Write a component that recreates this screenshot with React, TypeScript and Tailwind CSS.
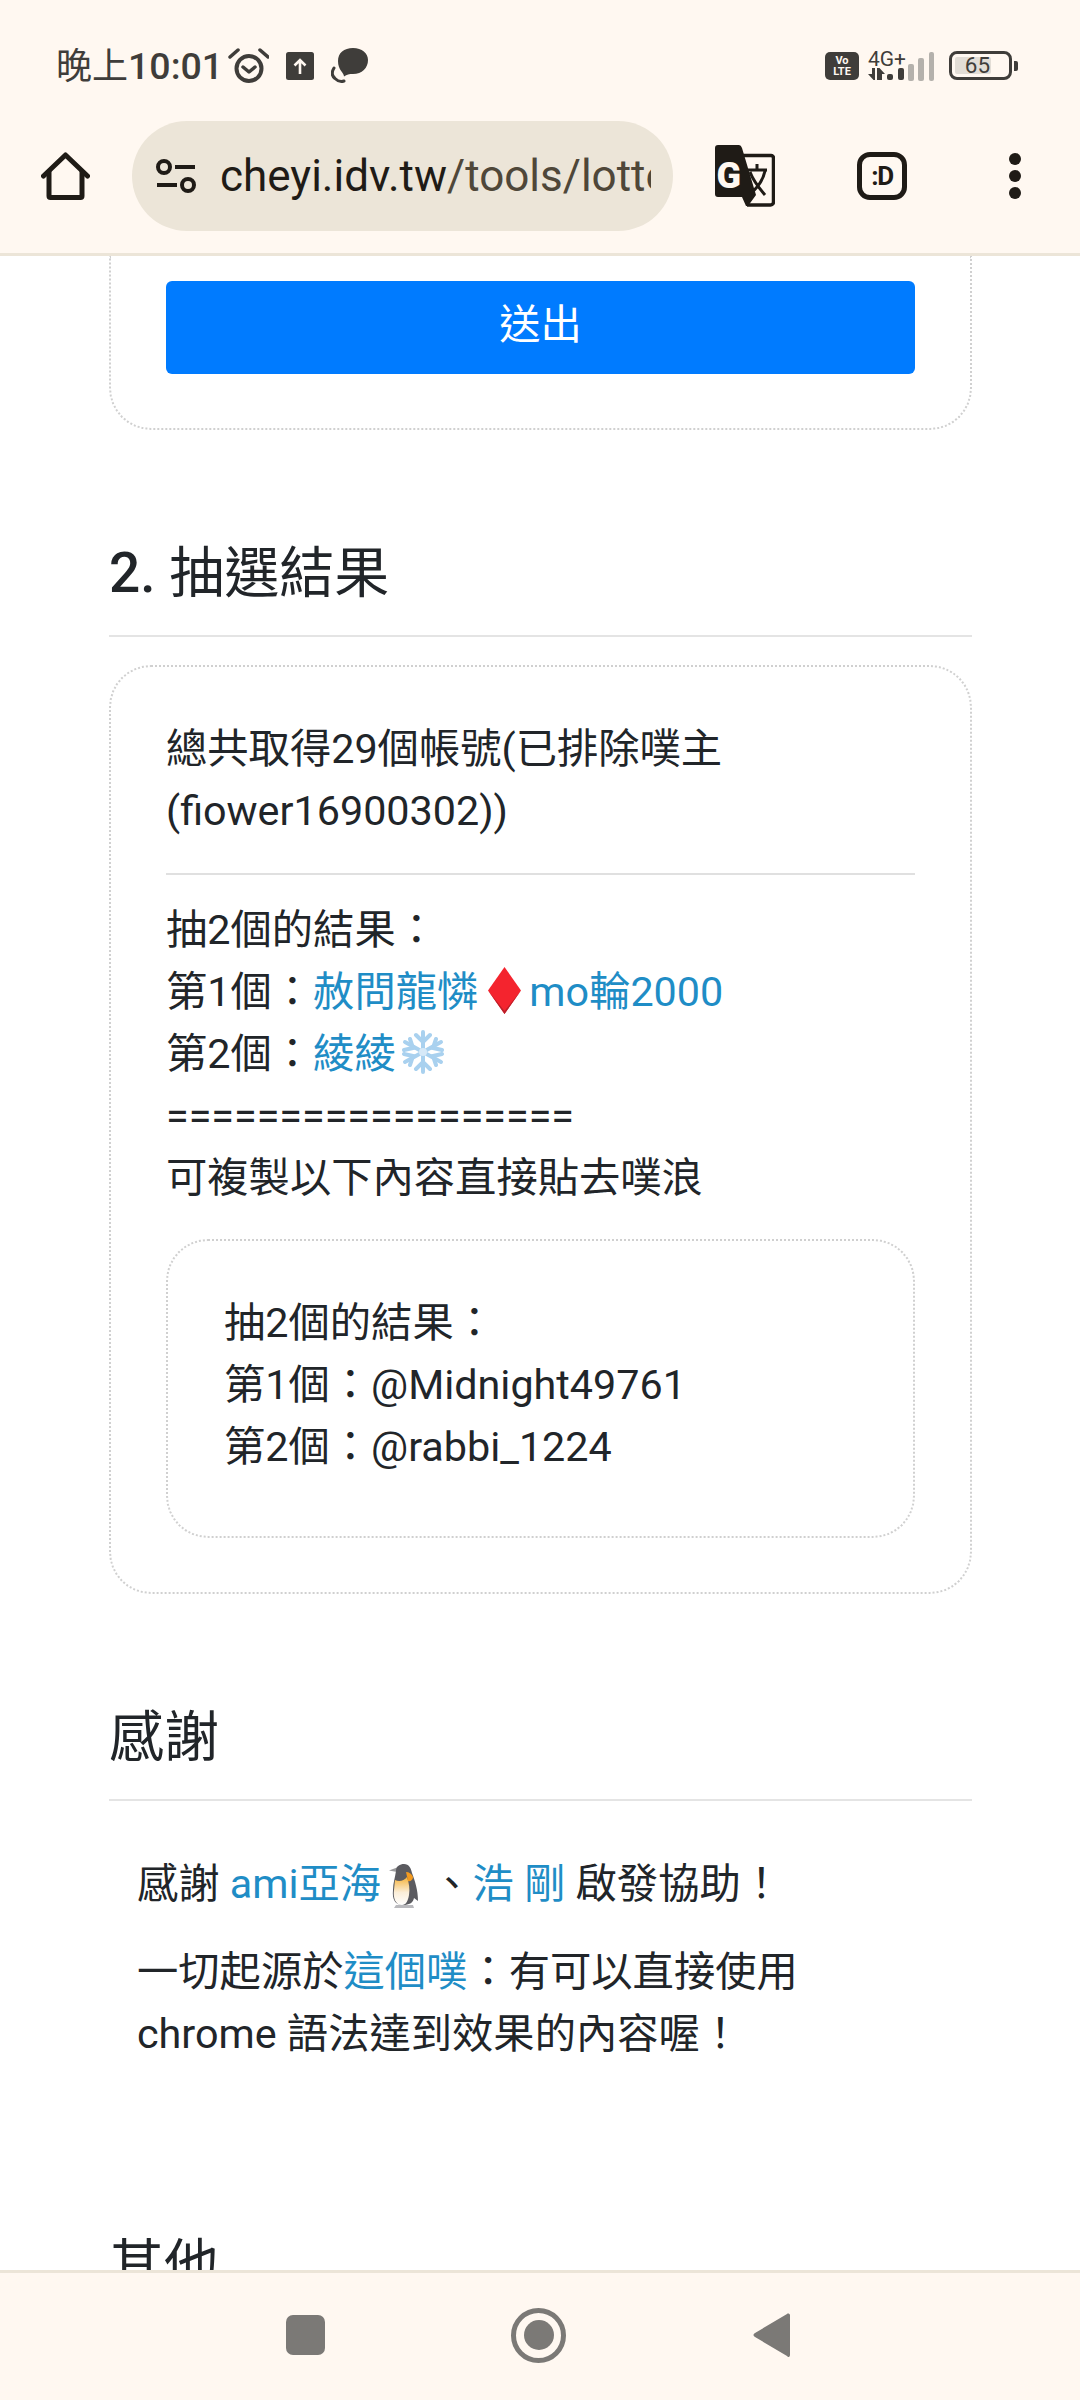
import React from "react";

function AlarmIcon() {
  return (
    <svg width="41" height="35" viewBox="0 0 41 35" fill="none" stroke="#3f3d3a">
      <circle cx="21" cy="20.500" r="12.500" strokeWidth="4" />
      <path d="M15 19l6 5 6-5" strokeWidth="3.500" strokeLinecap="round" strokeLinejoin="round" />
      <path d="M2 9l8-7M40 9l-8-7" strokeWidth="3.500" strokeLinecap="round" />
    </svg>
  );
}

function UploadBadge() {
  return (
    <svg width="28" height="28" viewBox="0 0 28 28">
      <rect width="28" height="28" rx="2.500" fill="#3f3d3a" />
      <path d="M14 22V8M8.500 13.500L14 8l5.500 5.500" stroke="#fff8f1" strokeWidth="2.600" fill="none" />
    </svg>
  );
}

function BubbleIcon() {
  return (
    <svg width="37" height="35" viewBox="0 0 37 35">
      <path d="M7 13C7 5 13 0 22 0c9 0 15 5 15 12 0 8-6 14-15 14-4 0-6 .5-9 2.500 0-4-6-6-6-15.500z" fill="#3f3d3a" />
      <path d="M3 20c-2.500 4-2 8 1 10.500 2.500 2.500 6 3.500 9 2.500" stroke="#3f3d3a" strokeWidth="3" fill="none" strokeLinecap="round" />
    </svg>
  );
}

function SignalIcon() {
  return (
    <svg width="66" height="32" viewBox="0 0 66 32">
      <path d="M0 24h4v-6h3v12h-1.500zM9 18h2.500L17 24h-3v6H9z" fill="#3f3d3a" />
      <rect x="19" y="24" width="6" height="6" rx="2" fill="#3f3d3a" />
      <rect x="30" y="18" width="6" height="12" rx="2" fill="#3f3d3a" />
      <rect x="40" y="14" width="6" height="17" rx="2" fill="#b4b1ac" />
      <rect x="50" y="8" width="6" height="23" rx="2" fill="#b4b1ac" />
      <rect x="61" y="2" width="5" height="29" rx="2" fill="#b4b1ac" />
    </svg>
  );
}

function HomeIcon() {
  return (
    <svg width="49" height="48" viewBox="0 0 49 48" fill="none" stroke="#1f1b16" strokeWidth="5" strokeLinecap="round" strokeLinejoin="round">
      <path d="M2.500 24L24.500 3l22 21" />
      <path d="M8 20v24a1.500 1.500 0 001.500 1.500h30A1.500 1.500 0 0041 44V20" />
    </svg>
  );
}

function TuneIcon() {
  return (
    <svg width="40" height="34" viewBox="0 0 40 34" fill="none" stroke="#1f1b16" strokeWidth="4">
      <circle cx="8" cy="8" r="6" />
      <path d="M19 8h20M1 26h20" />
      <circle cx="32" cy="26" r="6" />
    </svg>
  );
}

function TranslateIcon() {
  return (
    <svg width="60" height="62" viewBox="0 0 60 62" className="shrink-0">
      <path d="M28 10.500h28a2.500 2.500 0 012.500 2.500v44a3 3 0 01-3 3H32" fill="#fff8f1" stroke="#1f1b16" strokeWidth="3.500" />
      <path d="M3 0h21q2 0 3 3l14 47-8 11h-2l-4-9H3q-3 0-3-3V3q0-3 3-3z" fill="#1f1b16" />
      <text x="1.500" y="43" fontFamily="Roboto" fontWeight="900" fontSize="36" fill="#fff8f1">G</text>
      <path d="M33 25h19M42 19v6M50 26c-2 9-8 17-14 22M35 27c3 8 9 16 15 23" stroke="#1f1b16" strokeWidth="3" fill="none" />
    </svg>
  );
}

function MenuDots() {
  return (
    <div className="flex flex-col gap-[5px]">
      <div className="w-[12px] h-[12px] rounded-full bg-[#1f1b16]" />
      <div className="w-[12px] h-[12px] rounded-full bg-[#1f1b16]" />
      <div className="w-[12px] h-[12px] rounded-full bg-[#1f1b16]" />
    </div>
  );
}

function DiamondEmoji() {
  return (
    <svg width="33" height="47" viewBox="0 0 33 47" className="inline-block align-[-8px] ml-[10px] mr-[8px]">
      <path d="M16.500 0L33 23.500 16.500 47 0 23.500z" fill="#f4242e" />
      <path d="M0 23.500L16.500 47 33 23.500 16.500 44z" fill="#b9202a" />
    </svg>
  );
}

function SnowflakeEmoji() {
  return (
    <svg width="42" height="44" viewBox="0 0 42 44" className="inline-block align-[-6px] ml-[6px]" fill="none" stroke="#a9d1ef" strokeWidth="4" strokeLinecap="round">
      <path d="M21 2v40M3 12l36 20M39 12L3 32" />
      <path d="M14 5l7 7 7-7M14 39l7-7 7 7M2 20l9-2-3-9M40 20l-9-2 3-9M2 24l9 2-3 9M40 24l-9 2 3 9" />
      <circle cx="21" cy="22" r="4" fill="#d6e9f8" stroke="none" />
    </svg>
  );
}

function PenguinEmoji() {
  return (
    <svg width="30" height="44" viewBox="0 0 30 44" className="inline-block align-[-10px] ml-[8px] mr-[12px]">
      <defs>
        <linearGradient id="belly" x1="0" y1="0" x2="0" y2="1">
          <stop offset="0" stopColor="#f6b33a" />
          <stop offset="0.55" stopColor="#fbeed8" />
          <stop offset="1" stopColor="#ffffff" />
        </linearGradient>
      </defs>
      <path d="M0 6.500L8 3.500V8z" fill="#9a9a9c" />
      <path d="M7 7c0-5 4-7 8-7 5 0 7 4 8 9 3 8 6 17 6 28l-4-3c-1 5-5 7-11 7-8 0-11-6-10-15 0-7 2-12 3-19z" fill="#5b5b60" />
      <path d="M6 16c4 2 9 1 12-3 2 6 3 12 2 18-1 6-3 10-7 10-7 0-9-8-8-15z" fill="url(#belly)" />
      <path d="M17 8c3 0 6 2 7 5 0 3-3 5-5 4z" fill="#f39a1e" />
      <path d="M7 41h17l1 3H5z" fill="#b9b9bd" />
    </svg>
  );
}

function Heading({ children }: { children: React.ReactNode }) {
  return <h2 className="text-[55px] leading-[66px] font-normal text-[#212529] border-b-2 border-[#e4e4e4] pb-[29px]">{children}</h2>;
}

function A({ children }: { children: React.ReactNode }) {
  return <span className="text-[#1f8dc6]">{children}</span>;
}

export default function App() {
  return (
    <div className="w-[1080px] h-[2400px] flex flex-col overflow-hidden bg-white font-['Roboto','Noto_Sans_CJK_TC',sans-serif]">
      <header className="h-[256px] shrink-0 bg-[#fff8f1] border-b-[3px] border-[#ece5d8]">
        <div className="h-[121px] flex items-start pt-[48px] pl-[56px] pr-[68px]">
          <span className="text-[36px] leading-[40px] -mt-[2px] text-[#3f3d3a] mr-[5px]">晚上<span className="text-[37.500px] font-medium">10:01</span></span>
          <AlarmIcon />
          <span className="ml-[17px] mt-[4px]"><UploadBadge /></span>
          <span className="ml-[17px]"><BubbleIcon /></span>
          <div className="ml-auto flex items-start">
            <div className="w-[34px] h-[28px] mt-[4px] rounded-[5px] bg-[#3f3d3a] text-[#fff8f1] text-[11px] leading-[11px] font-bold text-center pt-[3px]">Vo<br />LTE</div>
            <div className="relative ml-[9px] w-[66px] h-[32px] mt-[2px]">
              <SignalIcon />
              <span className="absolute left-0 -top-[2px] text-[21px] leading-[22px] text-[#3f3d3a]">4G+</span>
            </div>
            <div className="ml-[15px] mt-[3px] w-[63px] h-[29px] rounded-[8px] border-[3px] border-[#3f3d3a] p-[3px] relative">
              <div className="h-full w-[70%] rounded-[2px] bg-[#e2ddd6]" />
              <span className="absolute inset-0 pr-[6px] text-center text-[22.500px] leading-[23px] text-[#3f3d3a]">65</span>
              <div className="absolute left-[62px] top-[7px] w-[4px] h-[10px] rounded-r-[2px] bg-[#3f3d3a]" />
            </div>
          </div>
        </div>
        <div className="flex items-center h-[110px]">
          <div className="ml-[41px] w-[49px] h-[48px] shrink-0"><HomeIcon /></div>
          <div className="ml-[42px] w-[541px] h-[110px] shrink-0 rounded-[55px] bg-[#ece5d8] flex items-center pl-[24px] pr-[22px]">
            <TuneIcon />
            <div className="ml-[24px] overflow-hidden whitespace-nowrap text-[44px] leading-[56px] text-[#4f4739] flex-1">
              <span className="text-[#1f1b16]">cheyi.idv.tw</span>/tools/lottery
            </div>
          </div>
          <div className="ml-[42px]"><TranslateIcon /></div>
          <div className="ml-[82px] w-[50px] h-[48px] shrink-0 rounded-[13px] border-[5px] border-[#1f1b16] flex items-center justify-center text-[26px] font-bold tracking-tighter text-[#1f1b16]">:D</div>
          <div className="ml-[102px]"><MenuDots /></div>
        </div>
      </header>

      <main className="flex-1 min-h-0 overflow-hidden pl-[109px] pr-[108px] text-[41.300px] leading-[62px] text-[#212529]">
        <section className="border-2 border-t-0 border-dotted border-[#d0d0d0] rounded-b-[42px] px-[55px] pt-[25px] pb-[54px]">
          <button className="w-full h-[93px] pb-[6px] rounded-[6px] bg-[#007bff] text-white text-[41.300px]">送出</button>
        </section>

        <div className="mt-[110px]">
          <Heading><span className="font-medium">2.</span> 抽選結果</Heading>
        </div>

        <section className="mt-[28px] border-2 border-dotted border-[#d0d0d0] rounded-[42px] px-[55px] pt-[51px] pb-[54px]">
          <p>總共取得29個帳號(已排除噗主<br />(fiower16900302))</p>
          <hr className="mt-[31px] mb-[24px] border-t-2 border-[#e0e0e0]" />
          <p>
            抽2個的結果：<br />
            第1個：<A>赦問龍憐</A><DiamondEmoji /><A>mo輪2000</A><br />
            第2個：<A>綾綾</A><SnowflakeEmoji /><br />
            ==================<br />
            可複製以下內容直接貼去噗浪
          </p>
          <div className="mt-[30px] border-2 border-dotted border-[#d0d0d0] rounded-[42px] px-[56px] pt-[51px] pb-[58px]">
            抽2個的結果：<br />
            第1個：@Midnight49761<br />
            第2個：@rabbi_1224
          </div>
        </section>

        <div className="mt-[110px]">
          <Heading>感謝</Heading>
        </div>

        <div className="px-[28px] pt-[52px]">
          <p>感謝 <A>ami亞海</A><PenguinEmoji />、<A>浩 剛</A> 啟發協助！</p>
          <p className="mt-[26px]">一切起源於<A>這個噗</A>：有可以直接使用<br />chrome 語法達到效果的內容喔！</p>
        </div>

        <div className="mt-[167px] text-[55px] leading-[66px]">其他</div>
      </main>

      <footer className="h-[130px] shrink-0 bg-[#fff8f1] border-t-[3px] border-[#ece5d8] flex items-center pl-[286px] pb-[3px]">
        <div className="w-[39px] h-[40px] rounded-[7px] bg-[#7b7976]" />
        <div className="ml-[186px] w-[55px] h-[55px] rounded-full border-[5px] border-[#7b7976] flex items-center justify-center">
          <div className="w-[30px] h-[30px] rounded-full bg-[#7b7976]" />
        </div>
        <svg width="37" height="46" viewBox="0 0 37 46" className="ml-[187px]">
          <path d="M37 3v40c0 2-2 3-3 1L2 25c-2-1-2-3 0-4L34 2c1-1 3 0 3 1z" fill="#7b7976" />
        </svg>
      </footer>
    </div>
  );
}
